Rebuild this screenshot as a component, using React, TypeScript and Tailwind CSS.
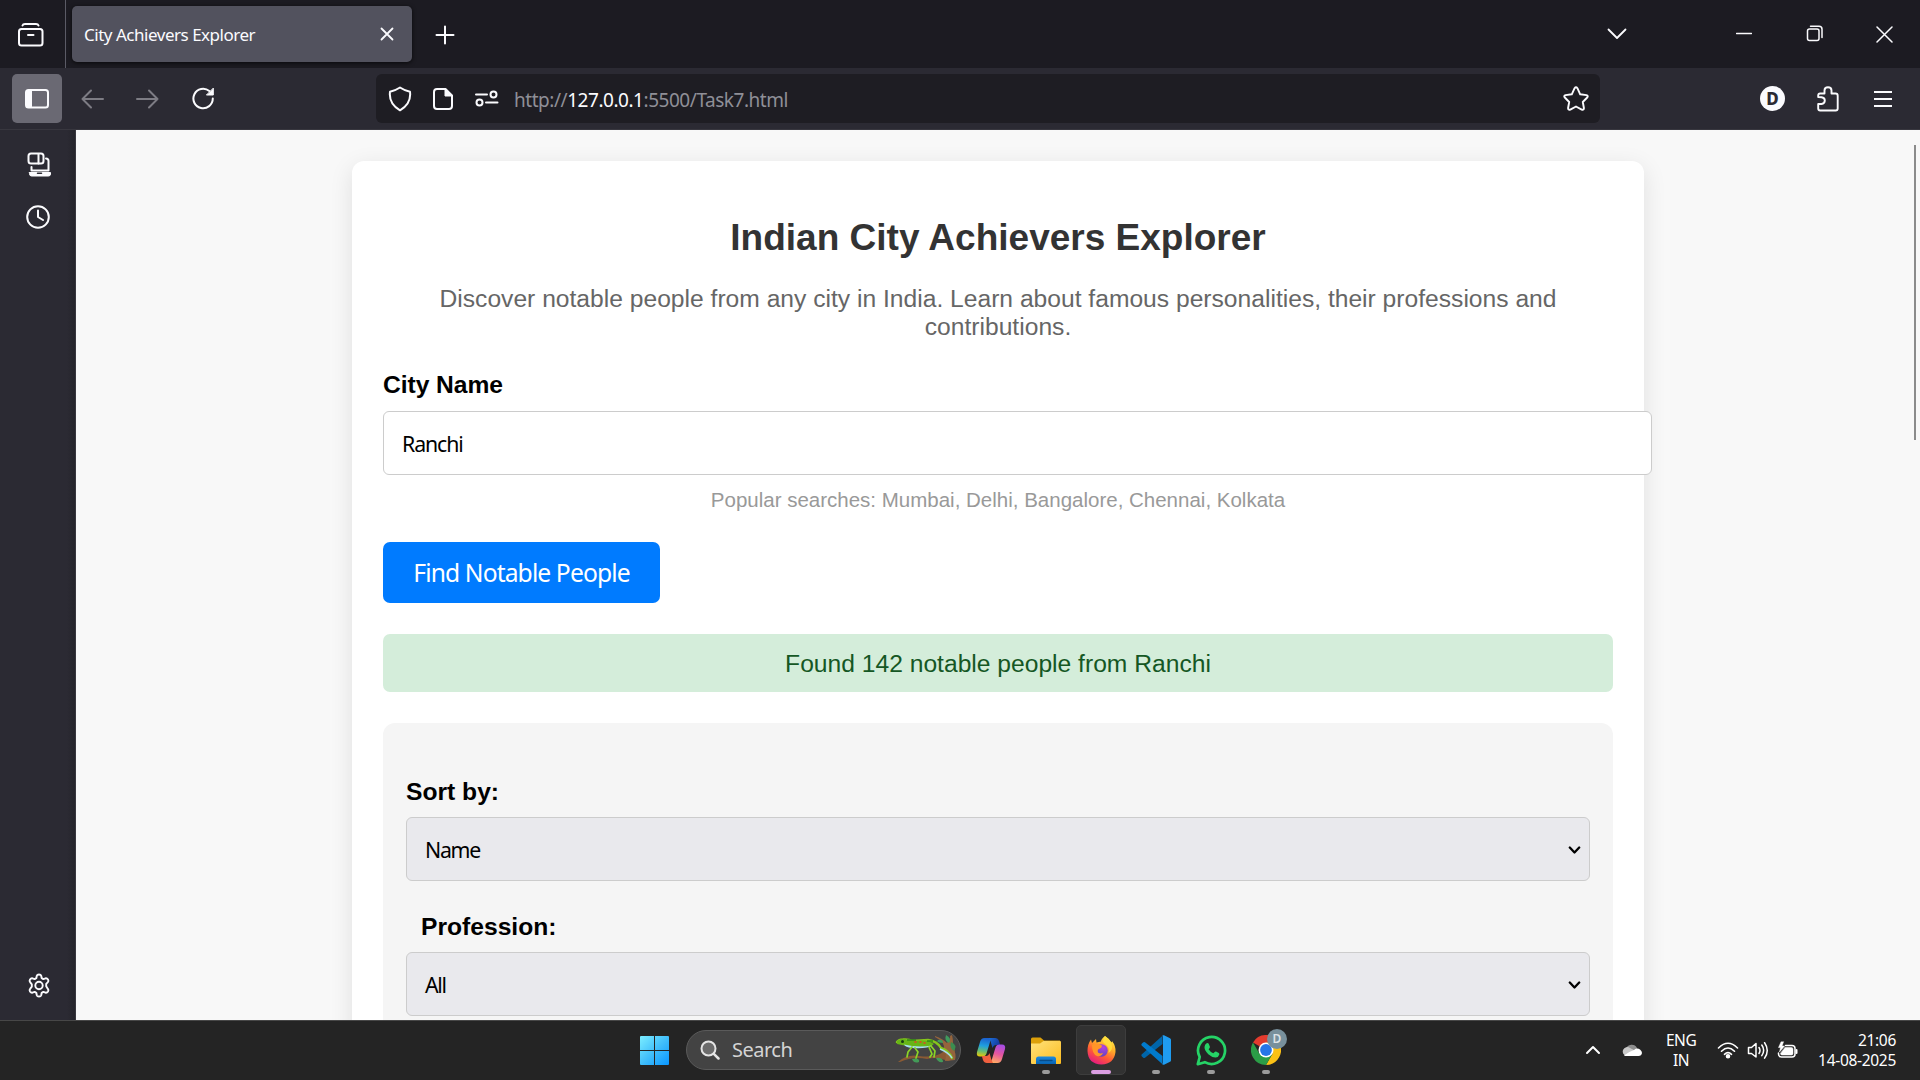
import React from "react";

type IconProps = {
  w: number;
  h: number;
  className?: string;
  children: React.ReactNode;
  sw?: number;
};

function Icon({ w, h, className = "", children, sw = 2 }: IconProps) {
  return (
    <svg
      width={w}
      height={h}
      viewBox={`0 0 ${w} ${h}`}
      fill="none"
      stroke="currentColor"
      strokeWidth={sw}
      strokeLinecap="round"
      strokeLinejoin="round"
      className={"shrink-0 " + className}
    >
      {children}
    </svg>
  );
}

function TabBar() {
  return (
    <div className="flex h-[68px] items-center bg-[#1c1b22] text-[#fbfbfe]">
      <div className="flex h-full w-[66px] items-center border-r border-[#5b5b66] pl-[18px]">
        <Icon w={26} h={24} className="mt-px">
          <path d="M4.500 2.500Q5 1 7 1h11q2 0 2.500 1.500" />
          <rect x="1" y="6" width="23.500" height="16.500" rx="2.500" />
          <path d="M10 12h5.500" />
        </Icon>
      </div>
      <div className="ml-1.5 flex h-14 w-[340px] items-center justify-between rounded-[5px] bg-[#52525e] pr-[18px] pl-3 shadow-[0_1px_4px_rgba(0,0,0,0.7)]">
        <span className="mt-px text-[17px] tracking-[-0.48px] whitespace-nowrap">City Achievers Explorer</span>
        <Icon w={14} h={14} sw={1.8}>
          <path d="M1.500 1.500l11 11M12.500 1.500l-11 11" />
        </Icon>
      </div>
      <Icon w={20} h={20} className="mt-0.5 ml-[23px]">
        <path d="M10 1.500v17M1.500 10h17" />
      </Icon>
      <div className="flex-1" />
      <Icon w={20} h={12} className="mr-[109px]" sw={1.8}>
        <path d="M1.500 1.500l8.500 8.500 8.500-8.500" />
      </Icon>
      <Icon w={16} h={4} className="mr-[54px]" sw={1.5}>
        <path d="M0.500 1.500h15" />
      </Icon>
      <Icon w={18} h={18} className="mr-[52px]" sw={1.5}>
        <rect x="1.500" y="4" width="11.500" height="11.500" rx="2" />
        <path d="M4.500 1.200h8.500q3 0 3 3v8.300" />
      </Icon>
      <Icon w={17} h={17} className="mr-[27px]" sw={1.5}>
        <path d="M1 1l15 15M16 1l-15 15" />
      </Icon>
    </div>
  );
}

function NavBar() {
  return (
    <div className="flex h-[62px] items-start border-b border-[#38373f] bg-[#2b2a33] pt-1.5 text-[#fbfbfe]">
      <div className="flex h-[49px] w-full items-center">
        <div className="ml-3 flex h-[49px] w-[50px] items-center justify-center rounded-[5px] bg-[#6a6973]">
          <Icon w={24} h={20}>
            <rect x="1" y="1" width="22" height="17.500" rx="2.500" />
            <path d="M2 2h4v15.500H2z" fill="currentColor" />
          </Icon>
        </div>
        <Icon w={23} h={20} className="ml-[19px] text-[#7d7c84]">
          <path d="M10 1.500L1.500 10l8.500 8.500M1.500 10H22" />
        </Icon>
        <Icon w={23} h={20} className="ml-8 text-[#7d7c84]">
          <path d="M13 1.500l8.500 8.500-8.500 8.500M21.500 10H1" />
        </Icon>
        <Icon w={23} h={23} className="ml-[33px]">
          <path d="M20.800 11.500a9.700 9.700 0 1 1-3.500-7.400" />
          <path d="M21.300 1.500v6.500h-6.500z" fill="currentColor" strokeWidth="1" />
        </Icon>
        <div className="ml-[161px] flex h-[49px] w-[1224px] items-center rounded-[6px] bg-[#1e1d23]">
          <Icon w={24} h={26} className="ml-3">
            <path d="M12 1.500Q16.500 4.500 22 5.800Q23.500 17.500 12 24.300Q0.500 17.500 2 5.800Q7.500 4.500 12 1.500z" />
          </Icon>
          <Icon w={20} h={22} className="ml-[21px]">
            <path d="M4 1h8.500L19 7.500V18q0 3-3 3H4q-3 0-3-3V4q0-3 3-3z" />
            <path d="M12 1v7h7z" fill="currentColor" strokeWidth="1" />
          </Icon>
          <Icon w={24} h={17} className="ml-[22px]">
            <path d="M1 4.500h11M11 12.500h11.500" />
            <circle cx="18.500" cy="4.500" r="3" />
            <circle cx="4.500" cy="12.500" r="3" />
          </Icon>
          <span className="mt-[3px] ml-[15px] text-[19px] tracking-[-0.460px] whitespace-nowrap text-[#8f8f97]">
            http://<span className="text-[#fbfbfe]">127.0.0.1</span>:5500/Task7.html
          </span>
          <div className="flex-1" />
          <Icon w={26} h={25} className="mr-[11px]" sw={1.9}>
            <path d="M11.600 2.200Q13 0.200 14.400 2.200L17.200 8.300L23.400 9.100Q25.600 9.600 24.200 11.500L19.800 16L20.900 22Q21 24.400 18.700 23.600L13 20.500L7.300 23.600Q5 24.400 5.100 22L6.200 16L1.800 11.500Q0.400 9.600 2.600 9.100L8.800 8.300z" />
          </Icon>
        </div>
        <div className="ml-40 flex size-[25px] items-center justify-center rounded-full bg-[#fbfbfe] text-[17px] font-extrabold text-[#2b2a33]">
          D
        </div>
        <Icon w={22} h={26} className="ml-[32px]" sw={1.9}>
          <path d="M1.200 11V9.500Q1.200 7.500 3.200 7.500H7.500V4.500Q7.500 1.200 11 1.200Q14.500 1.200 14.500 4.500V7.500H18.500Q20.700 7.500 20.700 9.700V22.500Q20.700 24.500 18.700 24.500H3.200Q1.200 24.500 1.200 22.500V18H4.500Q7.800 17.500 7.800 14.500Q7.800 11.500 4.500 11.200z" />
        </Icon>
        <Icon w={18} h={16} className="ml-[35px]">
          <path d="M1 1h16M1 8h16M1 15h16" strokeLinecap="square" />
        </Icon>
      </div>
    </div>
  );
}

function Sidebar() {
  return (
    <div className="flex w-[76px] flex-col items-center border-r border-[#38373f] bg-[linear-gradient(to_right,#2b2a33_67px,#25242b_75px)] pt-[22px] pb-[22px] text-[#fbfbfe]">
      <Icon w={25} h={25} className="ml-[3px]">
        <rect x="1.500" y="1.500" width="15" height="10" rx="2.500" />
        <path d="M11.500 2v9.500" />
        <path d="M4.500 15v3.500h17V9q0-2.500-2.500-2.500" />
        <path d="M2.500 20.500h21v1.500q0 2-2 2h-17q-2 0-2-2z" fill="currentColor" strokeWidth="1" />
        <path d="M10.500 21.300h4" stroke="#2b2a33" strokeWidth="1.500" />
      </Icon>
      <Icon w={24} h={24} className="mt-[28px]">
        <circle cx="12" cy="12" r="10.800" />
        <path d="M12 5.500v6.500l5 3" />
      </Icon>
      <div className="flex-1" />
      <Icon w={24} h={25} className="ml-[2px]" sw={1.9}>
        <path d="M9.300 5.200L9.800 2.800Q10.200 1.500 12 1.500Q13.800 1.500 14.200 2.800L14.700 5.200L16.300 6.100L18.600 5.300Q20 5 21 6.500Q21.900 8.100 20.900 9.100L19.200 10.800V13.200L20.900 15.900Q21.900 17 21 18.500Q20 20 18.600 19.700L16.300 18.900L14.700 19.800L14.200 22.200Q13.800 23.500 12 23.500Q10.200 23.500 9.800 22.200L9.300 19.800L7.700 18.900L5.400 19.700Q4 20 3 18.500Q2.100 17 3.100 15.900L4.800 13.700V11.300L3.100 9.100Q2.100 8.100 3 6.500Q4 5 5.400 5.300L7.700 6.100z" />
        <circle cx="12" cy="12.500" r="3.700" />
      </Icon>
    </div>
  );
}

function SelectBox({ value }: { value: string }) {
  return (
    <div className="flex h-16 items-center justify-between rounded-[6px] border border-[#cccccc] bg-[#e9e9ed] pr-2 pl-[18px] font-['Noto_Sans',sans-serif] text-[21.300px] tracking-[-1.300px] text-black">
      <span className="mt-0.5">{value}</span>
      <Icon w={13} h={9} className="mt-[3px]" sw={2.3}>
        <path d="M1.800 1.500l4.700 5 4.700-5" />
      </Icon>
    </div>
  );
}

function Page() {
  return (
    <div className="flex-1 overflow-hidden bg-[#f8f8f8] font-['Liberation_Sans',Arial,sans-serif] text-[24.640px] leading-[28px]">
      <div className="flex">
        <main className="mt-[31px] ml-[276px] h-[1100px] w-[1292px] rounded-[12px] bg-white p-[31px] shadow-[0_6px_23px_rgba(0,0,0,0.1)]">
          <h1 className="mt-[25px] text-center text-[37px] leading-[42px] font-bold text-[#333333]">
            Indian City Achievers Explorer
          </h1>
          <p className="mt-[26px] text-center text-[#666666]">
            Discover notable people from any city in India. Learn about famous personalities, their professions and
            contributions.
          </p>
          <label className="mt-[30px] block font-bold tracking-[-0.050px] text-black">City Name</label>
          <div className="mt-[12px] flex h-16 w-[1269px] items-center rounded-[6px] border border-[#cccccc] bg-white pl-[18px] font-['Noto_Sans',sans-serif] text-[21.300px] tracking-[-1.100px] text-black">
            <span className="mt-0.5">Ranchi</span>
          </div>
          <p className="mt-[11px] text-center text-[20.500px] text-[#999999]">
            Popular searches: Mumbai, Delhi, Bangalore, Chennai, Kolkata
          </p>
          <button className="mt-[28px] flex h-[61px] w-[277px] items-center justify-center rounded-[7px] bg-[#007bff] font-['Noto_Sans',sans-serif] text-[24.670px] tracking-[-0.900px] whitespace-nowrap text-white">
            Find Notable People
          </button>
          <div className="mt-[31px] flex h-[58px] items-center justify-center rounded-[7px] bg-[#d4edda] pt-0.5 text-[#155724]">
            Found 142 notable people from Ranchi
          </div>
          <section className="mt-[31px] h-[500px] rounded-[12px] bg-[#f5f5f5] px-[23px] pt-[55px] text-black">
            <div className="mb-[9px] h-[30px] font-bold">Sort by:</div>
            <SelectBox value="Name" />
            <div className="mt-[32px] mb-[9px] h-[30px] pl-[15px] font-bold">Profession:</div>
            <SelectBox value="All" />
          </section>
        </main>
        <div className="flex-1" />
        <div className="mt-[15px] mr-1 h-[295px] w-0.5 bg-[#8b8b8b]" />
      </div>
    </div>
  );
}

function Lizard() {
  return (
    <svg width="64" height="32" viewBox="0 0 64 32" fill="none" className="shrink-0">
      <path d="M3 28Q12 20 24 22Q40 24 48 18L60 15Q60 26 53 27Q42 22 32 25Q18 22 5 28z" fill="#8a5a34" />
      <path d="M40 2Q48 5 52 9Q56 4 55 2L57 1Q59 9 57 14Q62 19 60 26L50 27Q52 20 49 15Q50 8 40 3z" fill="#95643c" />
      <path d="M51 1Q57 4 54 9Q49 7 51 1z" fill="#3f9b5d" />
      <path d="M48 9Q40 8 43 6Q48 5 48 9z" fill="#3f9b5d" />
      <path d="M17 25Q25 23 24 28Q19 30 17 25z" fill="#439a58" />
      <path d="M41 24Q48 23 48 28Q43 29 41 24z" fill="#439a58" />
      <path d="M56 8Q63 11 59 17Q54 14 56 8z" fill="#3b8d50" />
      <path d="M2 8Q4 5.500 8 5.500Q14 5 17 7L33 6Q42 7 46 14Q53 16 57 24" stroke="#85c51b" strokeWidth="2.500" strokeLinecap="round" />
      <path d="M2 7Q8 3 12 6L20 7Q33 5 39 10L35 13Q25 14 12 12L2 10z" fill="#67b516" />
      <path d="M9 10.500Q23 14 37 11.500Q32 15 17 14Q10 13 9 10.500z" fill="#a5dff0" />
      <path d="M45 15Q53 18 57 24" stroke="#a9dce5" strokeWidth="1.500" />
      <path d="M17 13l-4 5-1 5M20 14l3 4-2 6M36 12l4 5-1 6M34 13l3 7-2 3" stroke="#8bd426" strokeWidth="1.700" strokeLinejoin="round" strokeLinecap="round" />
      <path d="M12 6h9M32 7h6" stroke="#318a14" strokeWidth="1.300" />
      <circle cx="7.500" cy="7.500" r="1.500" fill="#173b13" />
      <path d="M20 8h1M25 8h1M29 9h1" stroke="#ed3c24" strokeWidth="1.500" strokeLinecap="round" />
    </svg>
  );
}

function AppCell({ children, active = false, running = true }: { children: React.ReactNode; active?: boolean; running?: boolean }) {
  return (
    <div
      className={
        "relative mx-[2.500px] flex h-[50px] w-[50px] items-center justify-center rounded-[5px] " +
        (active ? "border border-[#3d3d3d] bg-[#323232]" : "")
      }
    >
      {children}
      {running && (
        <span
          className={
            "absolute left-1/2 h-1 -translate-x-1/2 rounded-full " +
            (active ? "bottom-0 w-5 bg-[#dc9fe3]" : "bottom-[1px] w-2 bg-[#9b9b9b]")
          }
        />
      )}
    </div>
  );
}

function Copilot() {
  return (
    <svg width="30" height="27" viewBox="0 0 30 27" className="shrink-0">
      <defs>
        <linearGradient id="cpA" x1="0.300" y1="0" x2="0.150" y2="1">
          <stop offset="0" stopColor="#1b62d0" />
          <stop offset="0.400" stopColor="#1f9fe0" />
          <stop offset="0.700" stopColor="#68bd71" />
          <stop offset="1" stopColor="#f0c800" />
        </linearGradient>
        <linearGradient id="cpB" x1="0.700" y1="0" x2="0.400" y2="1">
          <stop offset="0" stopColor="#a54ce4" />
          <stop offset="0.500" stopColor="#e4559f" />
          <stop offset="1" stopColor="#ffab63" />
        </linearGradient>
        <linearGradient id="cpC" x1="0" y1="0" x2="1" y2="0.400">
          <stop offset="0" stopColor="#1d6fd8" />
          <stop offset="1" stopColor="#153a9c" />
        </linearGradient>
      </defs>
      <path d="M8.500 1H18Q15 1.500 14 5L10.500 16.500Q9.600 19.500 6.500 19.500H4Q0 19.500 1 15L4 5Q5 1 8.500 1z" fill="url(#cpA)" />
      <path d="M13 1h6q3 0 4 3l1.200 4H20Q17.500 8 16.500 11L14.500 4z" fill="url(#cpC)" />
      <path d="M21.500 26H12Q15 25.500 16 22L19.500 10.500Q20.400 7.500 23.500 7.500H26Q30 7.500 29 12L26 22Q25 26 21.500 26z" fill="url(#cpB)" />
      <path d="M17 26h-6q-3 0-4-3l-1.200-4H10Q12.500 19 13.500 16L15.500 23z" fill="#f0603f" />
    </svg>
  );
}

function Explorer() {
  return (
    <svg width="30" height="28" viewBox="0 0 30 28" className="mt-0.5">
      <defs>
        <linearGradient id="fl" x1="0" y1="0" x2="1" y2="1">
          <stop offset="0" stopColor="#ffe27c" />
          <stop offset="1" stopColor="#fcbc1f" />
        </linearGradient>
        <linearGradient id="flb" x1="0" y1="0" x2="0" y2="1">
          <stop offset="0" stopColor="#1d8be0" />
          <stop offset="1" stopColor="#0763b3" />
        </linearGradient>
      </defs>
      <path d="M0 2q0-1.500 1.500-1.500h8L13 3.500h16v8H0z" fill="#dca00a" />
      <path d="M0 6.500h9L12.500 4H29q1 0 1 1v21q0 1-1 1H1q-1 0-1-1z" fill="url(#fl)" />
      <path d="M5 27v-5q0-2.500 2.500-2.500h15q2.500 0 2.500 2.500v5z" fill="url(#flb)" />
      <path d="M9 23.500h12" stroke="#084c89" strokeWidth="1.300" strokeLinecap="round" />
    </svg>
  );
}

function Firefox() {
  return (
    <svg width="29" height="30" viewBox="0 0 29 30">
      <defs>
        <linearGradient id="fx" x1="0.800" y1="0" x2="0.250" y2="1">
          <stop offset="0" stopColor="#fff34f" />
          <stop offset="0.350" stopColor="#ffae28" />
          <stop offset="0.650" stopColor="#ff5a36" />
          <stop offset="1" stopColor="#e31587" />
        </linearGradient>
        <radialGradient id="fxp" cx="0.650" cy="0.250" r="0.800">
          <stop offset="0" stopColor="#b542de" />
          <stop offset="1" stopColor="#5b45bd" />
        </radialGradient>
      </defs>
      <path d="M18 1Q22 3.500 24 7Q25 8 25 6Q29 11 28.500 17Q27 29 14.500 29.500Q1 29 .5 16Q.5 9 4 4.500L5 8Q7 6 9 4L9.500 7.500L14 6.500Q14 4 18 1z" fill="url(#fx)" />
      <circle cx="14.500" cy="15.500" r="6.200" fill="url(#fxp)" />
      <path d="M5 10Q8 8 11 9L15 10.500Q15 13 11.500 14Q10 15.500 11 17.500Q13 19 16 18Q14 22 10 21Q5 19 5 10z" fill="#ff9628" />
      <path d="M18 1Q14 6 18 9Q23 12 21.500 18Q27 15 24 7Q21 3 18 1z" fill="#ffdf3c" fillOpacity="0.850" />
    </svg>
  );
}

function VSCode() {
  return (
    <svg width="30" height="30" viewBox="0 0 30 30">
      <path d="M0.600 19.500L21.500.8V9L4 22.800Q3 23.500 2 22.500L.7 21.200Q0 20.400 .6 19.500z" fill="#0065a9" />
      <path d="M.6 10.500Q0 9.600 .7 8.800L2 7.500Q3 6.500 4 7.200L21.500 21v8.200z" fill="#007acc" />
      <path d="M21.500.3Q22.200 0 23 .3L29 3.200Q30 3.700 30 4.800V25.200q0 1.100-1 1.600L23 29.700Q22 30 21.200 29.300L22 28V2z" fill="#1f9cf0" />
    </svg>
  );
}

function WhatsApp() {
  return (
    <svg width="31" height="31" viewBox="0 0 31 31" fill="none">
      <path d="M1.800 29.200L3.700 22A13.500 13.500 0 1 1 8.800 27.200z" stroke="#25d366" strokeWidth="2.700" strokeLinejoin="round" />
      <path d="M10.600 8.300Q12.200 7.700 12.800 9.100L13.900 11.700Q14.100 12.600 13.300 13.400L12.600 14.300Q14.100 17 17.300 18.300L18.700 16.900Q19.300 16.300 20 16.600L22.800 17.900Q23.600 18.400 23.300 19.500Q22.600 22.200 19.800 22.600Q16.300 22.800 12.300 19.300Q8.400 15.300 8.500 12Q8.700 9.500 10.600 8.300z" fill="#25d366" />
    </svg>
  );
}

function Chrome() {
  return (
    <>
      <svg width="30" height="30" viewBox="0 0 30 30">
        <path d="M15 15L2 7.500A15 15 0 0 1 28 7.500H15z" fill="#e33b2e" />
        <path d="M28 7.500A15 15 0 0 1 15 30L21.500 18.700L15 7.500z" fill="#fbc116" />
        <path d="M2 7.500A15 15 0 0 0 15 30L21.500 18.700L8.500 18.700z" fill="#2b9d47" />
        <circle cx="15" cy="15" r="7.500" fill="#fff" />
        <circle cx="15" cy="15" r="5.900" fill="#2675e8" />
      </svg>
      <span className="absolute top-1 left-[26px] flex size-5 items-center justify-center rounded-full bg-[#78909c] text-[12px] font-semibold text-[#dce3e7]">
        D
      </span>
    </>
  );
}

function Taskbar() {
  return (
    <div className="flex h-[60px] items-center border-t border-[#474747] bg-[#242424] pb-px text-white">
      <svg width="29" height="29" viewBox="0 0 29 29" className="ml-[640px] shrink-0">
        <defs>
          <linearGradient id="win" x1="0" y1="0" x2="1" y2="1">
            <stop offset="0" stopColor="#7ceeff" />
            <stop offset="0.500" stopColor="#42bffb" />
            <stop offset="1" stopColor="#0996ff" />
          </linearGradient>
        </defs>
        <path d="M1 0h13v14H0V1q0-1 1-1zM15 0h13q1 0 1 1v13H15zM0 15h14v14H1q-1 0-1-1zM15 15h14v13q0 1-1 1H15z" fill="url(#win)" />
      </svg>
      <div className="ml-[17px] flex h-10 w-[275px] items-center rounded-full border border-[#5a5a5a] bg-[#434343]">
        <Icon w={20} h={20} className="ml-[13px] text-[#e4e4e4]">
          <circle cx="8.500" cy="8.500" r="7" fill="#6b6b6b" />
          <path d="M13.800 13.800l4.700 4.700" strokeWidth="2.500" />
        </Icon>
        <span className="ml-3 text-[20px] tracking-[-0.5px] text-[#d4d4d4]">Search</span>
        <div className="flex-1" />
        <div className="mr-px">
          <Lizard />
        </div>
      </div>
      <div className="ml-[2.500px] flex">
        <AppCell running={false}>
          <Copilot />
        </AppCell>
        <AppCell>
          <Explorer />
        </AppCell>
        <AppCell active>
          <Firefox />
        </AppCell>
        <AppCell>
          <VSCode />
        </AppCell>
        <AppCell>
          <WhatsApp />
        </AppCell>
        <AppCell>
          <Chrome />
        </AppCell>
      </div>
      <div className="flex-1" />
      <Icon w={16} h={10} className="mr-[21px]">
        <path d="M2 8l6-6 6 6" />
      </Icon>
      <svg width="20" height="14" viewBox="0 0 20 14" className="mr-6 shrink-0">
        <path d="M4 6A6 6 0 0 1 15 5L16 11H4z" fill="#8e8e8e" />
        <path d="M4.500 13A4.500 4.500 0 1 1 8 5L17 9.500L14 13z" fill="#c9c9c9" />
        <path d="M2 12.500Q6 9 12 7Q15 4.500 18 6.500Q20 8 20 10Q19.500 13 16.500 13H4.500Q3 13 2 12.500z" fill="#fff" />
      </svg>
      <div className="mr-[21px] w-[30px] text-center text-[15.500px] leading-5 tracking-[-0.5px]">
        ENG
        <br />
        IN
      </div>
      <Icon w={22} h={17} className="mr-[8px]" sw={1.6}>
        <path d="M1.500 6Q11-3.500 20.500 6M4.500 9.200Q11 2.800 17.500 9.200M7.500 12.300Q11 9 14.500 12.300" />
        <circle cx="11" cy="14.300" r="1.500" fill="currentColor" />
      </Icon>
      <Icon w={22} h={19} className="mr-[8px]" sw={1.5}>
        <path d="M1.500 6.500h3L9 2.500v13.500L4.500 12.500h-3z" />
        <path d="M12 6.500q2 3 0 6M14.800 4q3.700 5.300 0 10.700M17.600 1.700q5.300 7.700 0 15.500" />
      </Icon>
      <Icon w={22} h={18} className="mr-[19px]" sw={1.5}>
        <path d="M8.500 4.500H15q3 0 3 3v5.500q0 3-3 3H4.500q-3 0-3-3V12" />
        <path d="M8 6.500h6.500q1.500 0 1.500 1.500v4.500q0 1.500-1.500 1.500H5q-1.500 0-1.500-1.500z" fill="currentColor" strokeWidth="0.500" />
        <path d="M19.500 9v3" strokeWidth="2" />
        <path d="M4 1L1.500 6.500h2L2.500 11L7.500 5H5L6.500 1z" fill="currentColor" strokeWidth="0.500" />
      </Icon>
      <div className="mr-6 w-[78px] text-right text-[15.500px] leading-5 tracking-[-0.300px] whitespace-nowrap">
        21:06
        <br />
        14-08-2025
      </div>
    </div>
  );
}

export default function App() {
  return (
    <div className="flex h-[1080px] w-[1920px] flex-col overflow-hidden font-['Noto_Sans',sans-serif]">
      <TabBar />
      <NavBar />
      <div className="flex min-h-0 flex-1">
        <Sidebar />
        <Page />
      </div>
      <Taskbar />
    </div>
  );
}
